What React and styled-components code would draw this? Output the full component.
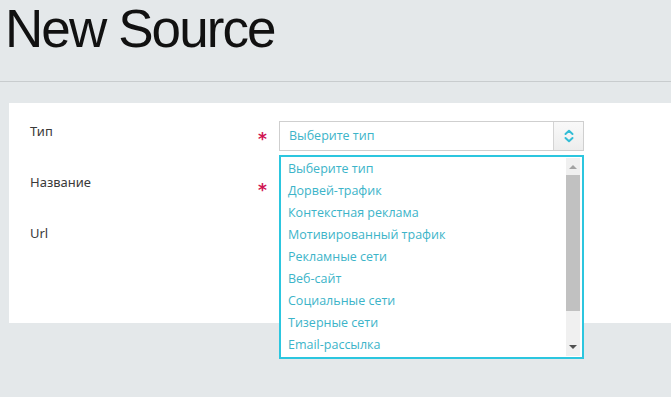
import React from 'react'
import styled, { createGlobalStyle } from 'styled-components'

const GlobalStyle = createGlobalStyle`
  html, body {
    margin: 0;
    padding: 0;
    background: #e4e8ea;
  }
  body {
    font-family: 'Noto Sans', 'Open Sans', sans-serif;
    overflow: hidden;
  }
`

const Page = styled.div`
  width: 671px;
  height: 397px;
`

const Header = styled.header`
  height: 82px;
  border-bottom: 1px solid #c8ccce;
  box-sizing: border-box;
  padding: 2px 0 0 5px;
`

const Title = styled.h1`
  margin: 0;
  font-family: 'Liberation Sans', Arial, sans-serif;
  font-weight: normal;
  font-size: 53px;
  line-height: 53px;
  letter-spacing: -1.9px;
  color: #111;
`

const Panel = styled.section`
  margin: 21px 0 0 9px;
  background: #fff;
  height: 220px;
  box-sizing: border-box;
  padding: 18px 0 0 21px;
  display: flex;
  flex-direction: column;
  gap: 21px;
`

const Row = styled.div`
  display: grid;
  grid-template-columns: 227px 22px 305px;
  height: 30px;
  position: relative;
`

const Label = styled.label`
  font-size: 13px;
  line-height: 20px;
  color: #3a3a3a;
  font-family: 'Noto Sans', sans-serif;
`

const Star = styled.span`
  color: #d01452;
  font-size: 17px;
  font-weight: bold;
  line-height: 30px;
  padding-top: 3px;
  font-family: 'DejaVu Sans', sans-serif;
  text-indent: 1px;
`

const Select = styled.div`
  display: flex;
  height: 30px;
  box-sizing: border-box;
  border: 1px solid #cfcfcf;
  background: #fff;
`

const Value = styled.div`
  flex: 1;
  padding-left: 9px;
  font-family: 'Open Sans', sans-serif;
  font-size: 12.5px;
  line-height: 28px;
  color: #3cb4c9;
`

const ArrowBox = styled.div`
  width: 29px;
  border-left: 1px solid #d4d4d4;
  background: linear-gradient(#f9f9f9, #ededed);
  display: flex;
  align-items: center;
  justify-content: center;
`

const Input = styled.div`
  height: 30px;
  box-sizing: border-box;
  border: 1px solid #cfcfcf;
`

const Dropdown = styled.div`
  position: absolute;
  left: 249px;
  top: 34px;
  width: 305px;
  height: 204px;
  box-sizing: border-box;
  border: 2px solid #2cc6df;
  background: #fff;
  display: flex;
  z-index: 2;
`

const Options = styled.ul`
  flex: 1;
  list-style: none;
  margin: 0;
  padding: 1px 0 0 7px;
`

const Option = styled.li`
  font-family: 'Open Sans', sans-serif;
  font-size: 12.5px;
  line-height: 22px;
  height: 22px;
  color: #3cb4c9;
  white-space: nowrap;
`

const Scrollbar = styled.div`
  width: 14px;
  margin: 1px 2px 1px 0;
  background: #f0f0f0;
  display: flex;
  flex-direction: column;
  align-items: center;
`

const ScrollButton = styled.div`
  height: 17px;
  width: 14px;
  display: flex;
  align-items: center;
  justify-content: center;
`

const Thumb = styled.div`
  width: 14px;
  height: 136px;
  background: #c1c1c1;
`

const Track = styled.div`
  flex: 1;
`

const Triangle = ({ up }) => (
  <svg width="8" height="5" viewBox="0 0 8 5">
    <path d={up ? 'M0 5 L4 1 L8 5 Z' : 'M0 0 L8 0 L4 4 Z'} fill={up ? '#a3a3a3' : '#505050'} />
  </svg>
)

const Chevrons = () => (
  <svg width="10" height="14" viewBox="0 0 10 14" fill="none" stroke="#33bdd6" strokeWidth="2" strokeLinecap="round" strokeLinejoin="round">
    <path d="M1.5 5 L5 1.8 L8.5 5" />
    <path d="M1.5 9 L5 12.2 L8.5 9" />
  </svg>
)

const options = [
  'Выберите тип',
  'Дорвей-трафик',
  'Контекстная реклама',
  'Мотивированный трафик',
  'Рекламные сети',
  'Веб-сайт',
  'Социальные сети',
  'Тизерные сети',
  'Email-рассылка'
]

const App = () => (
  <Page>
    <GlobalStyle />
    <Header>
      <Title>New Source</Title>
    </Header>
    <Panel>
      <Row>
        <Label>Тип</Label>
        <Star>*</Star>
        <Select>
          <Value>Выберите тип</Value>
          <ArrowBox>
            <Chevrons />
          </ArrowBox>
        </Select>
        {/* open list */}
        <Dropdown>
          <Options>
            {options.map((o) => (
              <Option key={o}>{o}</Option>
            ))}
          </Options>
          <Scrollbar>
            <ScrollButton>
              <Triangle up />
            </ScrollButton>
            <Thumb />
            <Track />
            <ScrollButton>
              <Triangle />
            </ScrollButton>
          </Scrollbar>
        </Dropdown>
      </Row>
      <Row>
        <Label>Название</Label>
        <Star>*</Star>
        <Input />
      </Row>
      <Row>
        <Label>Url</Label>
        <span />
        <Input />
      </Row>
    </Panel>
  </Page>
)

export default App
